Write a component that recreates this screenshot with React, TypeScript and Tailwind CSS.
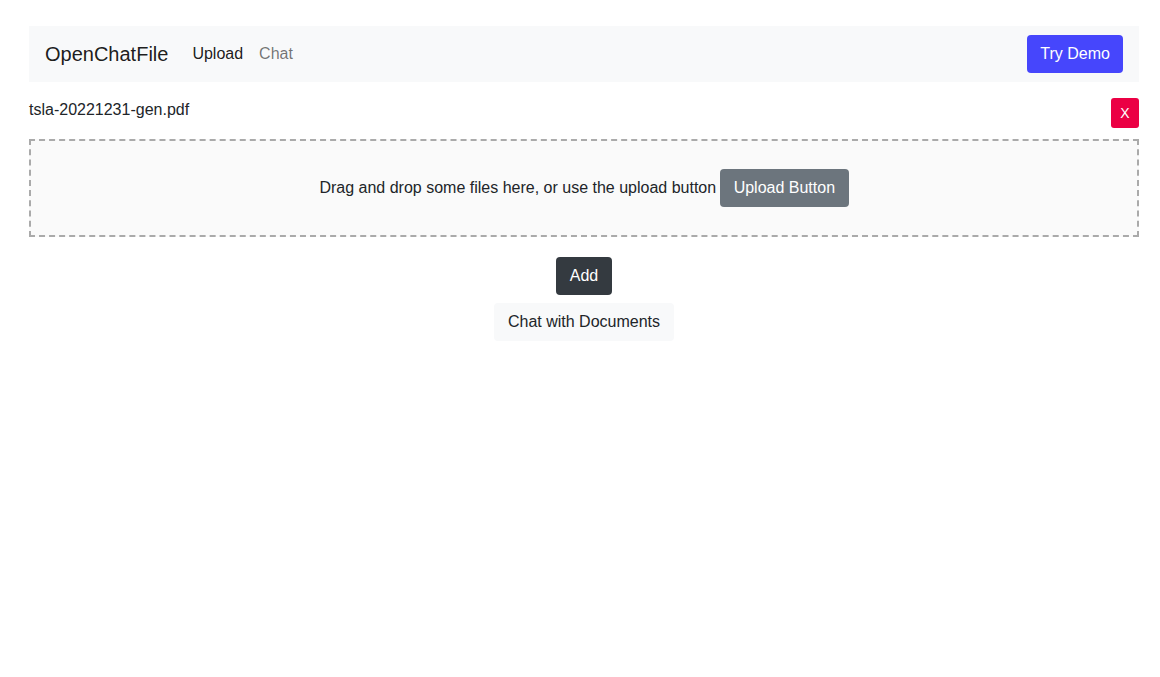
export default function App() {
  return (
    <div className="min-h-screen bg-white text-[#212529] font-['Liberation_Sans',Arial,sans-serif] text-base leading-6">
      <div className="ml-[29px] w-[1110px] pt-[26px]">
        <nav className="flex items-center justify-between bg-[#f8f9fa] px-4 py-2 h-[56px]">
          <div className="flex items-center">
            <span className="text-[20px] leading-[30px] py-[5px] mr-4 text-[rgba(0,0,0,0.9)]">OpenChatFile</span>
            <a className="px-2 py-2 text-[rgba(0,0,0,0.9)]">Upload</a>
            <a className="px-2 py-2 text-[rgba(0,0,0,0.55)]">Chat</a>
          </div>
          <button className="h-[38px] px-[13px] rounded bg-[#4646fc] text-white">Try Demo</button>
        </nav>

        <div className="flex items-start justify-between mt-[16px]">
          <span className="leading-6">tsla-20221231-gen.pdf</span>
          <button className="w-[28px] h-[30px] rounded-[3px] bg-[#eb0044] text-white text-sm">X</button>
        </div>

        <div className="mt-[11px] border-2 border-dashed border-[#aaaaaa] bg-[#fafafa] py-[28px] flex items-center justify-center">
          <span className="-mt-px">Drag and drop some files here, or use the upload button</span>
          <button className="ml-1 h-[38px] px-[13.5px] rounded bg-[#6c757d] text-white">Upload Button</button>
        </div>

        <div className="flex flex-col items-center mt-[20px] gap-[8px]">
          <button className="h-[38px] px-[13.5px] rounded bg-[#343a40] text-white">Add</button>
          <button className="h-[38px] px-[13.5px] rounded bg-[#f8f9fa] text-[#212529]">Chat with Documents</button>
        </div>
      </div>
    </div>
  );
}
